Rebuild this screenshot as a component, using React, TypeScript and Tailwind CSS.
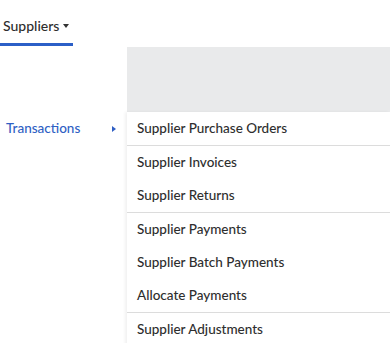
const groups = [
  ["Supplier Purchase Orders"],
  ["Supplier Invoices", "Supplier Returns"],
  ["Supplier Payments", "Supplier Batch Payments", "Allocate Payments"],
  ["Supplier Adjustments"],
];

const App = () => {
  return (
    <div className="w-[390px] h-[343px] overflow-hidden bg-white font-['Lato','Noto_Sans',sans-serif] text-[13px] text-[#2e2e2e] font-medium">
      {/* top nav */}
      <div className="h-[47px] flex items-end">
        <div className="w-[73px] h-full flex flex-col">
          <div className="flex-1 flex items-center pl-[3px] pt-[7px] gap-[4px] text-[14px] text-[#2e2e2e]">
            <span>Suppliers</span>
            <span className="block w-0 h-0 border-l-[3px] border-r-[3px] border-t-[4px] border-l-transparent border-r-transparent border-t-[#333] mt-[1px]"></span>
          </div>
          <div className="h-[3px] bg-[#2b5fc7]"></div>
          <div className="h-px"></div>
        </div>
      </div>

      <div className="flex h-[296px]">
        {/* left menu */}
        <div className="w-[127px] shrink-0 bg-white pt-[65px]">
          <div className="h-[33px] flex items-center justify-between pl-[6px] pr-[11px] text-[#2f5fc4]">
            <span className="text-[13.5px]">Transactions</span>
            <span className="block w-0 h-0 border-t-[3px] border-b-[3px] border-l-[4px] border-t-transparent border-b-transparent border-l-[#2f5fc4]"></span>
          </div>
        </div>

        {/* content */}
        <div className="flex-1 flex flex-col bg-[#e9eaeb] min-h-0">
          <div className="h-[65px] shrink-0"></div>
          <div className="flex-1 bg-white shadow-[-2px_0_3px_rgba(0,0,0,0.06)]">
            {groups.map((g, gi) => (
              <div key={gi} className={gi > 0 ? "border-t border-[#dcdcdc]" : ""}>
                {g.map((label) => (
                  <div key={label} className="h-[33px] flex items-center pl-[10px] text-[13.5px]">
                    {label}
                  </div>
                ))}
              </div>
            ))}
          </div>
        </div>
      </div>
    </div>
  );
};

export default App;
